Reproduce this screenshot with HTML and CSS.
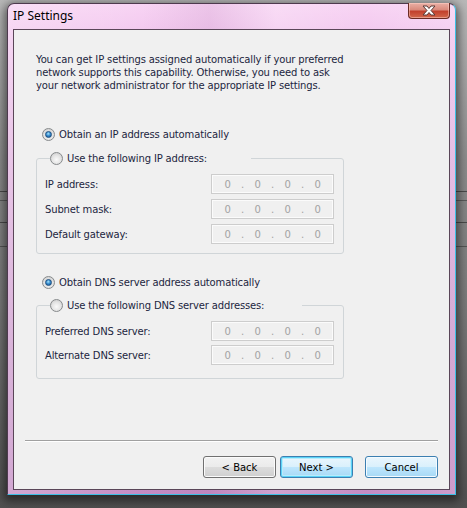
FILE: index.html
```html
<!DOCTYPE html>
<html lang="en">

<head>
	<meta charset="UTF-8">
	<meta name="viewport" content="width=device-width, initial-scale=1.0">
	<title>IP Settings</title>
	<link rel="stylesheet" href="styles.css">
</head>

<body>
	<div class="window">
		<div class="titlebar">
			<span class="title">IP Settings</span>
			<div class="close">
				<svg width="18" height="11" viewBox="0 0 18 11">
					<path d="M3 1 L7 1 L9 3.5 L11 1 L15 1 L11 5.5 L15 10 L11 10 L9 7.5 L7 10 L3 10 L7 5.5 Z" fill="#ffffff" stroke="#5a3a36" stroke-width="1" stroke-linejoin="round" />
				</svg>
			</div>
		</div>
		<div class="client">
			<p class="intro">You can get IP settings assigned automatically if your preferred<br>network supports this capability. Otherwise, you need to ask<br>your network administrator for the appropriate IP settings.</p>

			<div class="option first">
				<span class="radio on"></span>
				<span>Obtain an IP address automatically</span>
			</div>
			<fieldset class="group">
				<legend class="ip-legend"><span class="radio"></span><span>Use the following IP address:</span></legend>
				<div class="row">
					<span>IP address:</span>
					<div class="ipbox"><span>0</span><span>.</span><span>0</span><span>.</span><span>0</span><span>.</span><span>0</span></div>
				</div>
				<div class="row">
					<span>Subnet mask:</span>
					<div class="ipbox"><span>0</span><span>.</span><span>0</span><span>.</span><span>0</span><span>.</span><span>0</span></div>
				</div>
				<div class="row">
					<span>Default gateway:</span>
					<div class="ipbox"><span>0</span><span>.</span><span>0</span><span>.</span><span>0</span><span>.</span><span>0</span></div>
				</div>
			</fieldset>

			<div class="option second">
				<span class="radio on"></span>
				<span>Obtain DNS server address automatically</span>
			</div>
			<fieldset class="group dns">
				<legend class="dns-legend"><span class="radio"></span><span>Use the following DNS server addresses:</span></legend>
				<div class="row">
					<span>Preferred DNS server:</span>
					<div class="ipbox"><span>0</span><span>.</span><span>0</span><span>.</span><span>0</span><span>.</span><span>0</span></div>
				</div>
				<div class="row">
					<span>Alternate DNS server:</span>
					<div class="ipbox"><span>0</span><span>.</span><span>0</span><span>.</span><span>0</span><span>.</span><span>0</span></div>
				</div>
			</fieldset>

			<div class="spacer"></div>
			<div class="separator"></div>
			<div class="buttons">
				<button class="btn">&lt; Back</button>
				<button class="btn blue default">Next &gt;</button>
				<button class="btn blue cancel">Cancel</button>
			</div>
		</div>
	</div>
</body>

</html>
```

FILE: styles.css
```css
body {
	margin: 0;
	height: 508px;
	overflow: hidden;
	background-color: #8a8a8a;
	background-image:
		linear-gradient(to bottom, transparent 191px, #4a4a4a 191px, #4a4a4a 192px, transparent 192px,
			transparent 200px, #5a5a5a 200px, #5a5a5a 201px, transparent 201px,
			transparent 222px, #4a4a4a 222px, #4a4a4a 223px, transparent 223px,
			transparent 246px, #555 246px, #555 247px, transparent 247px),
		linear-gradient(to bottom, #b8b8b8, #8c8c8c 160px, #7a7a7a 300px, #505050);
	font-family: "DejaVu Sans", sans-serif;
}

.window {
	box-sizing: border-box;
	width: 449px;
	height: 492px;
	margin: 3px 0 0 7px;
	display: flex;
	flex-direction: column;
	padding: 0 5px 4px 5px;
	border: 1px solid #4e3a4e;
	border-right-color: #3cbfe6;
	border-bottom-color: #3cbfe6;
	border-radius: 7px 7px 0 0;
	background:
		linear-gradient(90deg, rgba(255, 255, 255, 0.25), rgba(255, 255, 255, 0) 30%, rgba(150, 90, 150, 0.12) 45%, rgba(255, 255, 255, 0.2) 60%, rgba(255, 255, 255, 0) 80%, rgba(255, 255, 255, 0.15)),
		linear-gradient(to bottom, #f8d4f4 0, #f2c8ee 30px, #e0b2de 160px, #cc9acc 350px, #c48cc4 100%);
	box-shadow: 0 3px 10px 3px rgba(0, 0, 0, 0.5);
}

.titlebar {
	height: 25px;
	display: flex;
	justify-content: space-between;
	align-items: flex-start;
}

.title {
	font-family: "Noto Sans", sans-serif;
	font-size: 12px;
	line-height: 14px;
	margin-top: 5px;
	color: #000;
}

.close {
	width: 42px;
	height: 16px;
	margin-top: -1px;
	box-sizing: border-box;
	border: 1px solid #6a2a24;
	border-top: none;
	border-radius: 0 0 4px 4px;
	background: linear-gradient(to bottom, #eab0a6 0, #d98a7c 45%, #c2402c 55%, #d2684c 100%);
	box-shadow: inset 0 0 0 1px rgba(255, 210, 200, 0.5);
	display: flex;
	align-items: center;
	justify-content: center;
}

.client {
	flex: 1;
	display: flex;
	flex-direction: column;
	border: 1px solid #5a4658;
	background-color: #f0f0f0;
	color: #1c2640;
	font-size: 10px;
	letter-spacing: -0.15px;
}

.intro {
	margin: 23px 0 0 22px;
	line-height: 13px;
}

.option {
	display: flex;
	align-items: center;
	gap: 4px;
	height: 14px;
	margin-left: 28px;
}

.option.first {
	margin-top: 35px;
}

.option.second {
	margin-top: 21px;
}

.radio {
	box-sizing: border-box;
	width: 13px;
	height: 13px;
	border-radius: 50%;
	border: 1px solid #878a8c;
	background: radial-gradient(circle at 50% 60%, #fafafa 0, #e4e4e4 50%, #c4c4c4 100%);
	display: flex;
	align-items: center;
	justify-content: center;
	flex: none;
}

.radio.on::after {
	content: "";
	width: 7px;
	height: 7px;
	box-sizing: border-box;
	border-radius: 50%;
	border: 1px solid #1d4f80;
	background: radial-gradient(circle at 45% 35%, #a8e4fb 0, #3a8fd0 45%, #0e4a8a 100%);
}

.group {
	box-sizing: border-box;
	width: 308px;
	margin: 10px 0 0 22px;
	padding: 9px 9px 9px 8px;
	border: 1px solid #d0d5d8;
	border-radius: 3px;
	min-width: 0;
}

.group.dns {
	margin-top: 9px;
	padding-bottom: 13px;
}

.group legend {
	display: flex;
	align-items: center;
	gap: 4px;
	height: 14px;
	padding: 0;
	margin-left: 5px;
}

.ip-legend {
	width: 201px;
}

.dns-legend {
	width: 252px;
}

.row {
	display: flex;
	justify-content: space-between;
	align-items: center;
	height: 20px;
	margin-bottom: 5px;
}

.row:last-child {
	margin-bottom: 0;
}

.dns .row {
	margin-bottom: 4px;
}

.dns .row:last-child {
	margin-bottom: 0;
}

.ipbox {
	box-sizing: border-box;
	width: 123px;
	height: 20px;
	border: 1px solid #cdcdcd;
	box-shadow: inset 0 0 0 1px #fbfbfb;
	background-color: #f0f0f0;
	display: flex;
	align-items: center;
	padding-left: 8px;
	color: #a3a3a3;
}

.ipbox span {
	width: 15px;
	text-align: center;
}

.spacer {
	flex: 1;
}

.separator {
	margin: 0 11px 14px 11px;
	height: 1px;
	background-color: #a0a0a0;
	border-bottom: 1px solid #ffffff;
}

.buttons {
	display: flex;
	justify-content: flex-end;
	gap: 4px;
	margin: 0 11px 11px 0;
}

.btn {
	box-sizing: border-box;
	width: 73px;
	height: 22px;
	padding: 0;
	font-family: "DejaVu Sans", sans-serif;
	font-size: 10px;
	color: #000;
	border: 1px solid #707070;
	border-radius: 3px;
	background: linear-gradient(to bottom, #f2f2f2 0, #ebebeb 50%, #dddddd 50%, #cfcfcf 100%);
	box-shadow: inset 0 0 0 1px #fbfbfb;
}

.btn.blue {
	border-color: #3c7fb1;
	background: linear-gradient(to bottom, #eaf6fd 0, #d9f0fc 50%, #bee6fd 50%, #a7d9f5 100%);
}

.btn.default {
	box-shadow: inset 0 0 0 1px #5bd3f7, inset 0 0 0 2px #b8ecfc;
}

.btn.cancel {
	margin-left: 8px;
	box-shadow: inset 0 0 0 1px #f4fbff;
}
```
